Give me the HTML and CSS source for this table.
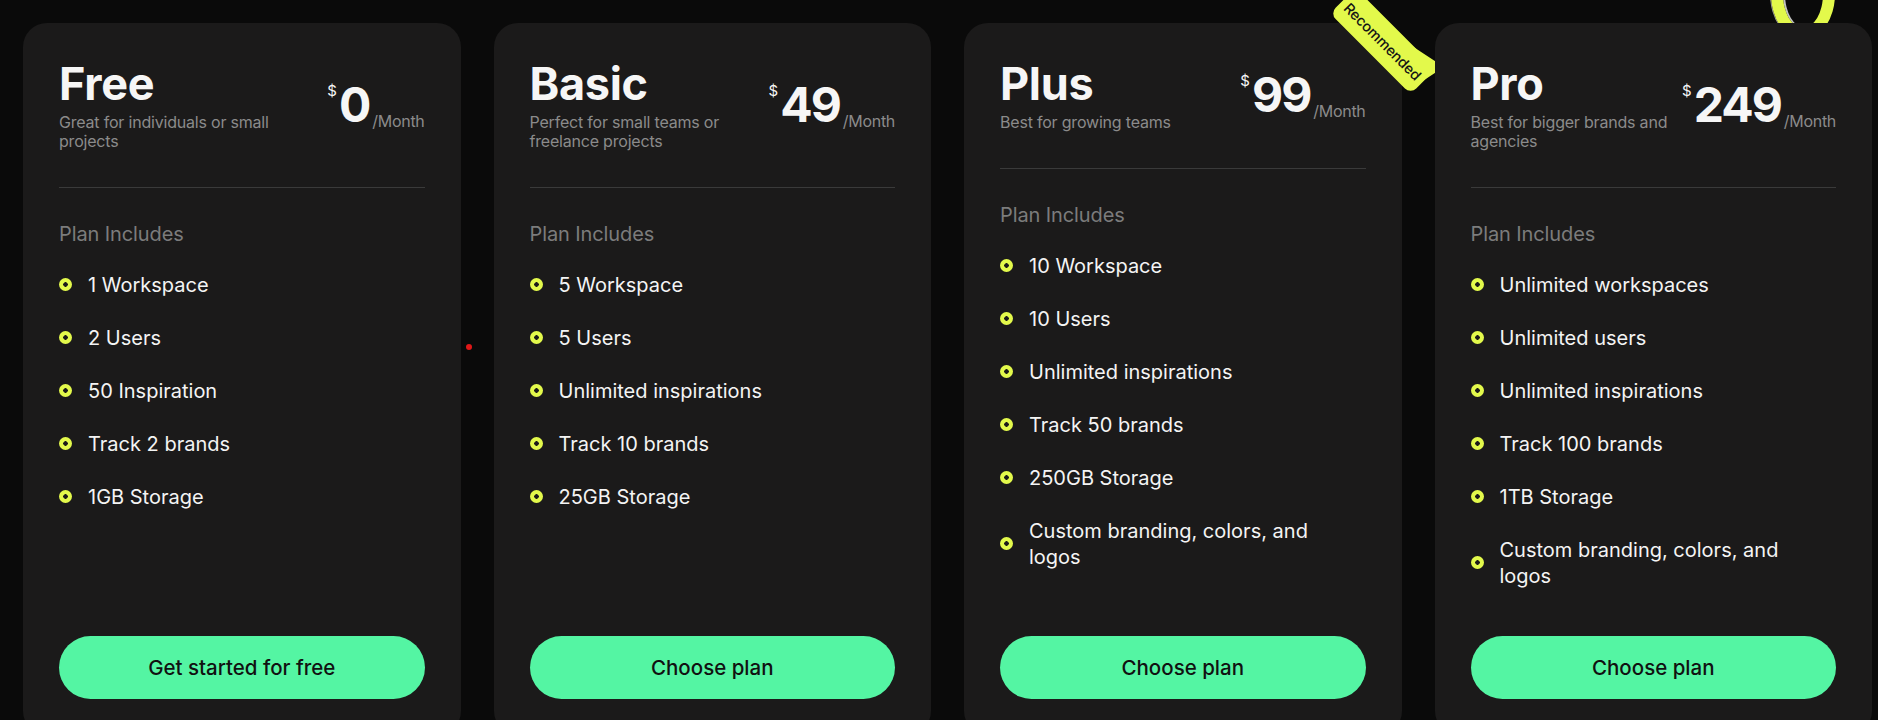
FILE: index.html
```html
<!DOCTYPE html>
<html lang="en">
<head>
<meta charset="utf-8">
<title>Pricing</title>
<link rel="stylesheet" href="styles.css">
</head>
<body>
<div class="stage">
  <div class="deco-ring"></div>
  <svg class="deco-arrow" width="40" height="50" viewBox="0 0 40 50"><path d="M4 4 L36 25 L4 46 L14 25 Z" fill="#e3f94b"/></svg>
  <span class="deco-dot"></span>
  <section class="pricing">
    <article class="card">
      <header class="card-head">
        <div class="plan">
          <h2 class="plan-name">Free</h2>
          <p class="plan-desc">Great for individuals or small projects</p>
        </div>
        <div class="price"><span class="cur">$</span><span class="num">0</span><span class="per">/Month</span></div>
      </header>
      <hr class="divider">
      <h3 class="includes">Plan Includes</h3>
      <ul class="features">
        <li><span class="bullet"></span><span>1 Workspace</span></li>
        <li><span class="bullet"></span><span>2 Users</span></li>
        <li><span class="bullet"></span><span>50 Inspiration</span></li>
        <li><span class="bullet"></span><span>Track 2 brands</span></li>
        <li><span class="bullet"></span><span>1GB Storage</span></li>
      </ul>
      <button class="cta">Get started for free</button>
    </article>
    <article class="card">
      <header class="card-head">
        <div class="plan">
          <h2 class="plan-name">Basic</h2>
          <p class="plan-desc">Perfect for small teams or freelance projects</p>
        </div>
        <div class="price"><span class="cur">$</span><span class="num">49</span><span class="per">/Month</span></div>
      </header>
      <hr class="divider">
      <h3 class="includes">Plan Includes</h3>
      <ul class="features">
        <li><span class="bullet"></span><span>5 Workspace</span></li>
        <li><span class="bullet"></span><span>5 Users</span></li>
        <li><span class="bullet"></span><span>Unlimited inspirations</span></li>
        <li><span class="bullet"></span><span>Track 10 brands</span></li>
        <li><span class="bullet"></span><span>25GB Storage</span></li>
      </ul>
      <button class="cta">Choose plan</button>
    </article>
    <article class="card">
      <span class="badge">Recommended</span>
      <header class="card-head">
        <div class="plan">
          <h2 class="plan-name">Plus</h2>
          <p class="plan-desc">Best for growing teams</p>
        </div>
        <div class="price"><span class="cur">$</span><span class="num">99</span><span class="per">/Month</span></div>
      </header>
      <hr class="divider">
      <h3 class="includes">Plan Includes</h3>
      <ul class="features">
        <li><span class="bullet"></span><span>10 Workspace</span></li>
        <li><span class="bullet"></span><span>10 Users</span></li>
        <li><span class="bullet"></span><span>Unlimited inspirations</span></li>
        <li><span class="bullet"></span><span>Track 50 brands</span></li>
        <li><span class="bullet"></span><span>250GB Storage</span></li>
        <li><span class="bullet"></span><span>Custom branding, colors, and logos</span></li>
      </ul>
      <button class="cta">Choose plan</button>
    </article>
    <article class="card">
      <header class="card-head">
        <div class="plan">
          <h2 class="plan-name">Pro</h2>
          <p class="plan-desc">Best for bigger brands and agencies</p>
        </div>
        <div class="price"><span class="cur">$</span><span class="num">249</span><span class="per">/Month</span></div>
      </header>
      <hr class="divider">
      <h3 class="includes">Plan Includes</h3>
      <ul class="features">
        <li><span class="bullet"></span><span>Unlimited workspaces</span></li>
        <li><span class="bullet"></span><span>Unlimited users</span></li>
        <li><span class="bullet"></span><span>Unlimited inspirations</span></li>
        <li><span class="bullet"></span><span>Track 100 brands</span></li>
        <li><span class="bullet"></span><span>1TB Storage</span></li>
        <li><span class="bullet"></span><span>Custom branding, colors, and logos</span></li>
      </ul>
      <button class="cta">Choose plan</button>
    </article>
  </section>
</div>
</body>
</html>
```
FILE: styles.css
```css
* { box-sizing: border-box; }
html, body { margin: 0; padding: 0; }
body {
  background: #0a0a0a;
  font-family: Inter, "Noto Sans", "Liberation Sans", sans-serif;
  color: #f4f4f4;
  overflow: hidden;
  height: 720px;
}
.stage { position: relative; height: 720px; }
.deco-ring {
  position: absolute;
  left: 1771px;
  top: -52px;
  width: 64px;
  height: 92px;
  border: 12px solid #e3f94b;
  border-radius: 50%;
  box-shadow: inset 2px 0 0 rgba(255,255,255,0.75), -1px 0 0 rgba(255,255,255,0.6);
  z-index: 0;
}
.deco-arrow { position: absolute; left: 1408px; top: 42px; z-index: 0; }
.deco-dot {
  position: absolute;
  left: 466px; top: 344px;
  width: 6px; height: 6px;
  border-radius: 50%;
  background: #e01818;
  z-index: 0;
}
.pricing {
  position: relative;
  z-index: 1;
  display: grid;
  grid-template-columns: repeat(4, 1fr);
  gap: 33px;
  width: 1849px;
  margin-left: 23px;
  padding-top: 23px;
}
.card {
  position: relative;
  background: #1b1a1a;
  border-radius: 24px;
  height: 712px;
  padding: 36px 36px 36px;
  display: flex;
  flex-direction: column;
}
.card-head {
  display: flex;
  justify-content: space-between;
  align-items: center;
}
.plan-name {
  margin: 0;
  font-size: 45px;
  line-height: 49.5px;
  font-weight: 700;
  letter-spacing: -0.3px;
  color: #f6f6f6;
}
.plan-desc {
  margin: 4px 0 0;
  max-width: 222px;
  font-size: 16px;
  line-height: 19px;
  color: #8b8b8b;
  letter-spacing: -0.2px;
}
.price {
  display: flex;
  align-items: flex-start;
  color: #f6f6f6;
}
.cur { font-size: 15px; line-height: 16px; margin-top: 2px; margin-right: 2px; }
.num { font-size: 48px; line-height: 48px; font-weight: 700; letter-spacing: -2px; }
.per {
  align-self: flex-end;
  font-size: 16px;
  line-height: 19px;
  color: #8b8b8b;
  margin-left: 3px;
  margin-bottom: -2px;
  letter-spacing: -0.3px;
}
.divider {
  margin: 36px 0 0;
  border: 0;
  height: 1px;
  background: #3a3a3a;
}
.includes {
  margin: 34px 0 0;
  font-size: 20px;
  line-height: 24px;
  font-weight: 400;
  color: #7c7c7c;
  letter-spacing: -0.1px;
}
.features {
  list-style: none;
  margin: 26px 0 0;
  padding: 0;
  display: flex;
  flex-direction: column;
  gap: 27px;
}
.features li {
  display: flex;
  align-items: center;
  gap: 16px;
  font-size: 20px;
  line-height: 26px;
  letter-spacing: 0;
  color: #f4f4f4;
  max-width: 322px;
}
.bullet {
  flex: none;
  width: 13px;
  height: 13px;
  border-radius: 50%;
  background: radial-gradient(circle, #1b1a1a 0 2px, #e3f94b 2.5px);
}
.cta {
  margin-top: auto;
  height: 63px;
  width: 100%;
  border: 0;
  border-radius: 32px;
  background: #54f5a3;
  color: #111;
  font-family: inherit;
  font-size: 20.5px;
  font-weight: 500;
  letter-spacing: 0;
}
.badge {
  position: absolute;
  left: 362px;
  top: 0;
  width: 114px;
  height: 36px;
  background: #e3f94b;
  color: #151515;
  border-radius: 8px;
  font-size: 14.5px;
  font-weight: 500;
  letter-spacing: -0.2px;
  display: flex;
  align-items: center;
  justify-content: center;
  transform: rotate(45deg);
}
```
